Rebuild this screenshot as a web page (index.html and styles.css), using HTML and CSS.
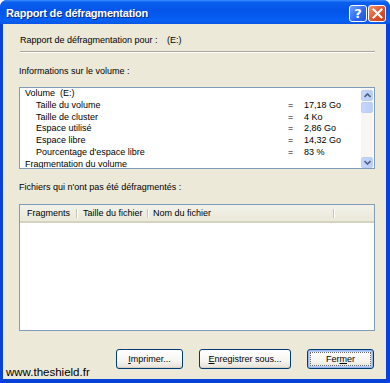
FILE: index.html
```html
<!DOCTYPE html>
<html lang="fr">
<head>
    <meta charset="UTF-8">
    <meta name="viewport" content="width=device-width, initial-scale=1.0">
    <title>Rapport de défragmentation</title>
    <link rel="stylesheet" href="styles.css">
</head>
<body>
    <div class="window">
        <!-- Title bar -->
        <div class="titlebar">
            <span class="title">Rapport de défragmentation</span>
            <div class="caption-buttons">
                <div class="cap-btn help">?</div>
                <div class="cap-btn close">
                    <svg width="11" height="11" viewBox="0 0 11 11">
                        <path d="M1.5 1.5 L9.5 9.5 M9.5 1.5 L1.5 9.5" stroke="#fff" stroke-width="2" stroke-linecap="square"/>
                    </svg>
                </div>
            </div>
        </div>

        <div class="client">
            <div class="label report-for"><span class="report-key">Rapport de défragmentation pour :</span><span>(E:)</span></div>
            <div class="sep"></div>

            <div class="label section">Informations sur le volume :</div>
            <div class="listbox">
                <div class="listbox-rows">
                    <div class="row"><span>Volume&nbsp; (E:)</span><span></span><span></span></div>
                    <div class="row child"><span>Taille du volume</span><span>=</span><span>17,18 Go</span></div>
                    <div class="row child"><span>Taille de cluster</span><span>=</span><span>4 Ko</span></div>
                    <div class="row child"><span>Espace utilisé</span><span>=</span><span>2,86 Go</span></div>
                    <div class="row child"><span>Espace libre</span><span>=</span><span>14,32 Go</span></div>
                    <div class="row child"><span>Pourcentage d'espace libre</span><span>=</span><span>83 %</span></div>
                    <div class="row"><span>Fragmentation du volume</span><span></span><span></span></div>
                </div>
                <div class="scrollbar">
                    <div class="sb-btn">
                        <svg width="7" height="5" viewBox="0 0 7 5"><path d="M0.5 4 L3.5 1 L6.5 4" fill="none" stroke="#4D6185" stroke-width="1.6"/></svg>
                    </div>
                    <div class="sb-thumb"></div>
                    <div class="sb-track"></div>
                    <div class="sb-btn">
                        <svg width="7" height="5" viewBox="0 0 7 5"><path d="M0.5 1 L3.5 4 L6.5 1" fill="none" stroke="#4D6185" stroke-width="1.6"/></svg>
                    </div>
                </div>
            </div>

            <div class="label section">Fichiers qui n'ont pas été défragmentés :</div>
            <div class="listview">
                <div class="lv-header">
                    <div class="lv-col col-frag">Fragments</div>
                    <div class="lv-col col-size">Taille du fichier</div>
                    <div class="lv-col col-name">Nom du fichier</div>
                    <div class="lv-col col-rest"></div>
                </div>
            </div>

            <div class="buttons">
                <button class="btn"><u>I</u>mprimer...</button>
                <button class="btn wide"><u>E</u>nregistrer sous...</button>
                <button class="btn default"><span class="focus">Fer<u>m</u>er</span></button>
            </div>
        </div>

        <div class="watermark">www.theshield.fr</div>
    </div>
</body>
</html>
```

FILE: styles.css
```css
body {
    margin: 0;
    font-family: "Liberation Sans", Arial, sans-serif;
    font-size: 9px;
    color: #000;
}
.window {
    position: relative;
    width: 390px;
    height: 383px;
    box-sizing: border-box;
    display: flex;
    flex-direction: column;
    background: #0842d8;
    border-radius: 7px 7px 0 0;
    overflow: hidden;
}
.titlebar {
    height: 24px;
    flex: none;
    display: flex;
    align-items: center;
    justify-content: space-between;
    padding: 0 4px 0 6px;
    background: linear-gradient(#3b8cff 0%, #0a5fee 10%, #0454e8 45%, #0760f4 85%, #0a56e4 100%);
}
.title {
    color: #fff;
    font-family: "Liberation Sans", Arial, sans-serif;
    font-weight: bold;
    font-size: 11px;
    letter-spacing: -0.2px;
    text-shadow: 1px 1px 0 #0a2a8a;
    margin-top: 2px;
}
.caption-buttons {
    display: flex;
    gap: 1px;
    margin-top: 2px;
}
.cap-btn {
    width: 16px;
    height: 15px;
    border: 1px solid #fff;
    border-radius: 3px;
    display: flex;
    align-items: center;
    justify-content: center;
}
.help {
    background: linear-gradient(135deg, #6fa0ff, #2a66ec 60%, #1d55dc);
    color: #fff;
    font-family: "DejaVu Sans", sans-serif;
    font-weight: bold;
    font-size: 13px;
}
.close {
    background: linear-gradient(135deg, #f4946f, #e0502a 55%, #c93a16);
}
.client {
    flex: 1;
    margin: 0 4px 4px 3px;
    background: #ece9d8;
    padding: 9px 11px 0 16px;
    display: flex;
    flex-direction: column;
}
.label {
    line-height: 14px;
}
.report-for {
    padding-left: 1px;
    display: flex;
}
.report-key {
    width: 147px;
}
.sep {
    margin: 4px 0 0 1px;
    border-top: 1px solid #aca899;
    border-bottom: 1px solid #fff;
}
.section {
    margin-top: 11px;
}
.listbox {
    margin-top: 9px;
    height: 82px;
    box-sizing: border-box;
    border: 1px solid #7f9db9;
    background: #fff;
    display: flex;
    overflow: hidden;
}
.listbox-rows {
    flex: 1;
    padding: 0 0 0 5px;
}
.row {
    display: grid;
    grid-template-columns: 1fr 16px 57px;
    line-height: 11.8px;
    white-space: nowrap;
}
.row.child span:first-child {
    padding-left: 11px;
}
.scrollbar {
    width: 12px;
    flex: none;
    margin-right: 1px;
    padding-top: 2px;
    display: flex;
    flex-direction: column;
    background: #f7f6f2;
}
.sb-btn, .sb-thumb {
    height: 11px;
    box-sizing: border-box;
    border: 1px solid #bccdf6;
    border-radius: 2px;
    background: linear-gradient(90deg, #c6d6fd, #b9cdfb);
    display: flex;
    align-items: center;
    justify-content: center;
}
.sb-thumb {
    margin-top: 1px;
}
.sb-track {
    flex: 1;
}
.listview {
    margin-top: 10px;
    height: 127px;
    box-sizing: border-box;
    border: 1px solid #7f9db9;
    background: #fff;
}
.lv-header {
    display: flex;
    height: 18px;
    box-sizing: border-box;
    background: linear-gradient(#f3f2ea, #ebeadb 80%);
    border-bottom: 2px solid #d6d2c2;
}
.lv-col {
    display: flex;
    align-items: center;
    padding-left: 7px;
    box-sizing: border-box;
    position: relative;
    white-space: nowrap;
}
.lv-col::after {
    content: "";
    position: absolute;
    right: 0;
    top: 4px;
    bottom: 3px;
    width: 1px;
    background: #c7c5b2;
    box-shadow: 1px 0 0 #fff;
}
.col-frag { width: 57px; }
.col-size { width: 71px; padding-left: 6px; }
.col-name { width: 186px; padding-left: 5px; }
.col-rest { flex: 1; }
.col-rest::after { display: none; }
.buttons {
    margin-top: 18px;
    display: flex;
    justify-content: flex-end;
    gap: 16px;
    padding-right: 1px;
}
.btn {
    width: 67px;
    height: 20px;
    padding: 0;
    font-family: inherit;
    font-size: 9px;
    color: #000;
    border: 1px solid #003c74;
    border-radius: 3px;
    background: linear-gradient(#ffffff, #f6f5f0 60%, #e3e1d6);
    box-shadow: inset 0 -1px 0 #d6d0c5;
}
.btn.wide {
    width: 92px;
}
.btn.default {
    box-shadow: inset 0 0 0 1px #9bb7ee, inset 0 0 0 2px #b9cef5;
}
.focus {
    display: inline-block;
    width: 59px;
    line-height: 12px;
    outline: 1px dotted #6a6a6a;
}
.watermark {
    position: absolute;
    left: 6px;
    top: 366px;
    font-family: "Liberation Sans", Arial, sans-serif;
    font-size: 11.5px;
    color: #000;
}
```
